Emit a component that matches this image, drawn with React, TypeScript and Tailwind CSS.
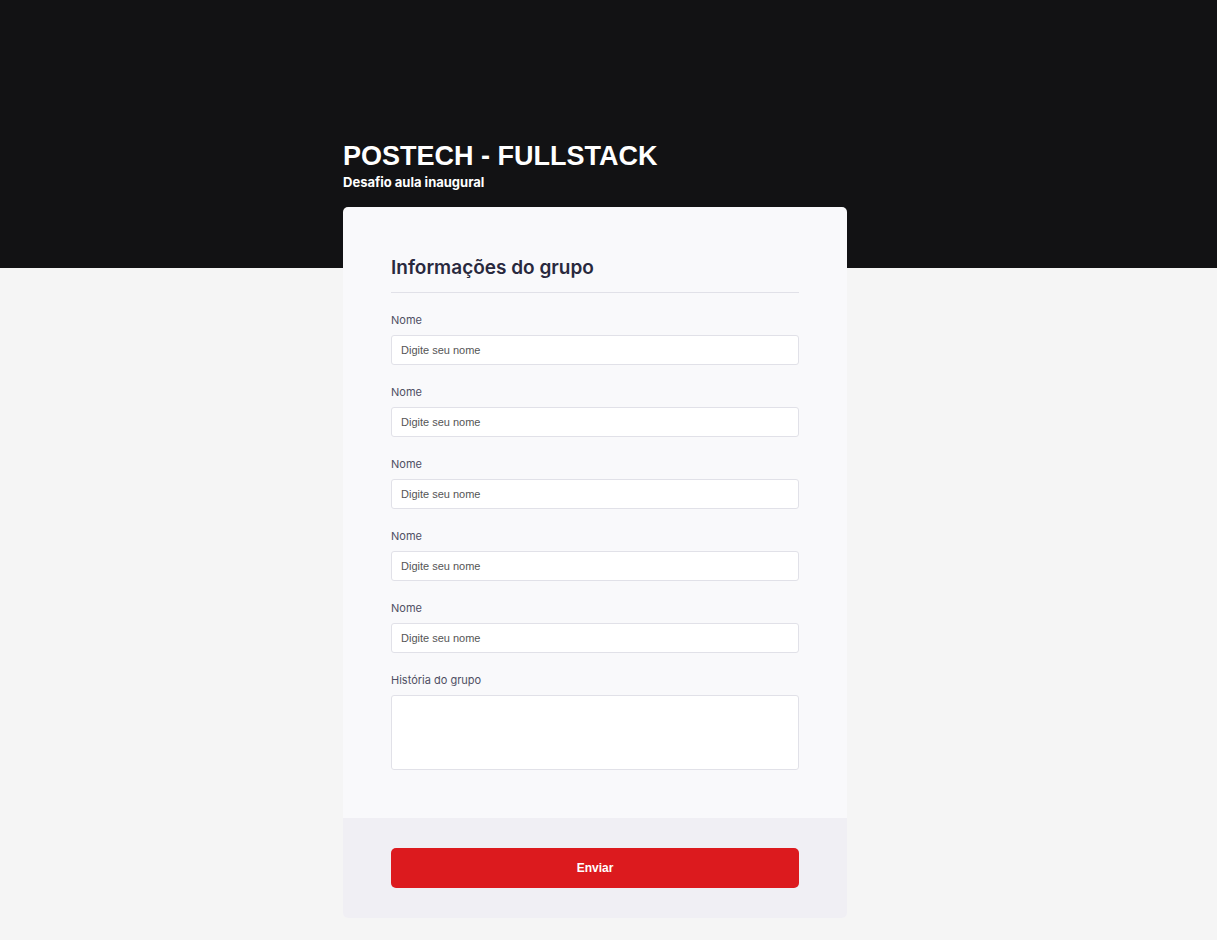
import React from 'react';

const FIELDS = ['Nome', 'Nome', 'Nome', 'Nome', 'Nome'];

function Field({ label }: { label: string }) {
  return (
    <div className="flex flex-col">
      <label className="text-[11px] leading-[16px] text-[#4f4f63] font-['Inter',sans-serif]">{label}</label>
      <input
        className="mt-[7px] h-[30px] w-full rounded-[3px] border border-[#e1e1e8] bg-white px-[9px] text-[11px] text-[#333] outline-none placeholder:text-[#555] font-['Liberation_Sans',Arial,sans-serif]"
        placeholder="Digite seu nome"
      />
    </div>
  );
}

export default function App() {
  return (
    <div className="min-h-screen bg-[linear-gradient(to_bottom,#121214_268px,#f5f5f5_268px)] pb-[22px] pr-[27px]">
      <div className="mx-auto w-[504px] pt-[141px]">
        <h1 className="text-[27px] leading-[30px] font-bold text-white font-['Liberation_Sans',Arial,sans-serif]">
          POSTECH - FULLSTACK
        </h1>
        <p className="mt-[3px] text-[13px] leading-[16px] font-bold text-white font-['Inter',sans-serif]">
          Desafio aula inaugural
        </p>
        <div className="mt-[17px] overflow-hidden rounded-[5px] bg-[#f9f9fb]">
          <div className="px-[48px] pt-[48px] pb-[48px]">
            <h2 className="text-[19px] leading-[26px] font-semibold text-[#29293e] font-['Inter',sans-serif]">
              Informações do grupo
            </h2>
            <div className="mt-[11px] h-px bg-[#e1e1e8]" />
            <div className="mt-[19px] flex flex-col gap-[19px]">
              {FIELDS.map((f, i) => (
                <Field key={i} label={f} />
              ))}
              <div className="flex flex-col">
                <label className="text-[11px] leading-[16px] text-[#4f4f63] font-['Inter',sans-serif]">
                  História do grupo
                </label>
                <textarea className="mt-[7px] h-[75px] w-full resize-none rounded-[3px] border border-[#e1e1e8] bg-white px-[10px] py-[6px] text-[12px] outline-none" />
              </div>
            </div>
          </div>
          <div className="bg-[#f0eff4] px-[48px] py-[30px]">
            <button className="h-[40px] w-full rounded-[5px] bg-[#dc1a1e] text-[12px] font-bold text-white font-['Liberation_Sans',Arial,sans-serif]">
              Enviar
            </button>
          </div>
        </div>
      </div>
    </div>
  );
}
